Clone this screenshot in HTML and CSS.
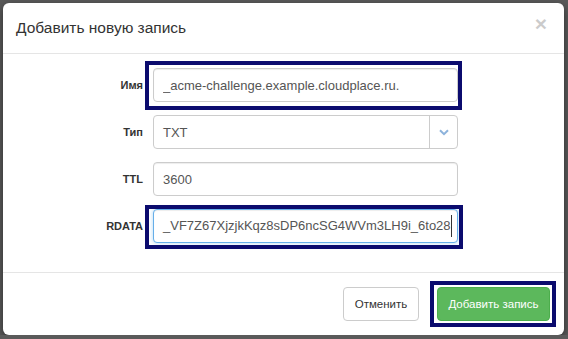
FILE: index.html
```html
<!DOCTYPE html>
<html>
<head>
<meta charset="utf-8">
<link rel="stylesheet" href="styles.css">
</head>
<body>
    <div class="modal">
        <div class="modal-header">
            <h4>Добавить новую запись</h4>
            <span class="close">&times;</span>
        </div>
        <div class="modal-body">
            <div class="form-row">
                <label>Имя</label>
                <div class="field marked mark-name">
                    <input type="text" value="_acme-challenge.example.cloudplace.ru.">
                </div>
            </div>
            <div class="form-row">
                <label>Тип</label>
                <div class="field select">
                    <span class="select-value">TXT</span>
                    <span class="select-arrow">
                        <svg width="10" height="7" viewBox="0 0 10 7"><path d="M1 1.2 L5 5.2 L9 1.2" fill="none" stroke="#8db3dc" stroke-width="2"/></svg>
                    </span>
                </div>
            </div>
            <div class="form-row">
                <label>TTL</label>
                <div class="field">
                    <input type="text" value="3600">
                </div>
            </div>
            <div class="form-row">
                <label>RDATA</label>
                <div class="field marked mark-rdata">
                    <div class="fake-input focused"><span class="caret-text">_VF7Z67XjzjkKqz8sDP6ncSG4WVm3LH9i_6to28</span></div>
                </div>
            </div>
        </div>
        <div class="modal-footer">
            <button class="btn btn-default">Отменить</button>
            <span class="marked mark-btn"><button class="btn btn-success">Добавить запись</button></span>
        </div>
    </div>
</body>
</html>
```
FILE: styles.css
```css
body {
    margin: 0;
    background-color: #5a5a5a;
    font-family: "Liberation Sans", Arial, sans-serif;
    color: #333;
}
.modal {
    margin: 3px 4px 0 3px;
    height: 332px;
    background-color: #fff;
    border-radius: 6px;
    box-shadow: 0 3px 9px rgba(0,0,0,0.5);
    display: flex;
    flex-direction: column;
}
.modal-header {
    display: flex;
    justify-content: space-between;
    align-items: flex-start;
    padding: 12px 15px 12px 13px;
    border-bottom: 1px solid #e5e5e5;
}
.modal-header h4 {
    margin: 0;
    font-size: 15.5px;
    font-weight: normal;
    line-height: 26px;
}
.close {
    font-size: 21px;
    font-weight: bold;
    line-height: 21px;
    color: #000;
    opacity: 0.2;
    margin-top: -2px;
    margin-right: 2px;
}
.modal-body {
    padding: 14px 15px 29px;
}
.form-row {
    display: grid;
    grid-template-columns: 125px 305px;
    column-gap: 10px;
    align-items: center;
    margin-bottom: 13px;
}
.form-row:last-child {
    margin-bottom: 0;
}
.form-row label {
    text-align: right;
    font-size: 11px;
    font-weight: bold;
    color: #333;
}
.field {
    position: relative;
    height: 34px;
}
.field input,
.fake-input,
.select {
    box-sizing: border-box;
    width: 305px;
    height: 34px;
    border: 1px solid #ccc;
    border-radius: 4px;
    padding: 0 9px;
    font-family: "Liberation Sans", Arial, sans-serif;
    font-size: 13px;
    color: #555;
    box-shadow: inset 0 1px 1px rgba(0,0,0,0.075);
    background: #fff;
}
.fake-input {
    display: flex;
    align-items: center;
    white-space: nowrap;
    overflow: hidden;
}
.focused {
    border-color: #66afe9;
    box-shadow: inset 0 1px 1px rgba(0,0,0,0.075), 0 0 4px rgba(102,175,233,0.5);
}
.caret-text {
    border-right: 1px solid #333;
    line-height: 22px;
}
.select {
    display: flex;
    align-items: center;
    padding-right: 0;
    box-shadow: none;
}
.select-value {
    flex: 1;
}
.select-arrow {
    width: 27px;
    height: 100%;
    border-left: 1px solid #ccc;
    display: flex;
    align-items: center;
    justify-content: center;
}
.select-arrow svg {
    margin-top: 1px;
}
.marked::after {
    content: "";
    position: absolute;
    border: 4px solid #0b0b6e;
    pointer-events: none;
}
.mark-name::after {
    left: -8px;
    right: -4px;
    top: -7px;
    bottom: -8px;
}
.mark-rdata::after {
    left: -8px;
    right: -5px;
    top: -4px;
    bottom: -6px;
}
.mark-btn {
    position: relative;
    display: inline-block;
}
.mark-btn::after {
    left: -7px;
    right: -6px;
    top: -6px;
    bottom: -6px;
}
.modal-footer {
    border-top: 1px solid #e5e5e5;
    padding: 14px 14px 13px;
    display: flex;
    justify-content: flex-end;
    gap: 18px;
}
.btn {
    height: 34px;
    border-radius: 4px;
    font-family: "Liberation Sans", Arial, sans-serif;
    font-size: 11.5px;
    padding: 0;
    border: 1px solid #ccc;
    display: block;
    white-space: nowrap;
}
.btn-default {
    background: #fff;
    color: #333;
    width: 76px;
}
.btn-success {
    background: #5cb85c;
    border-color: #4cae4c;
    color: #fff;
    width: 113px;
}
```
